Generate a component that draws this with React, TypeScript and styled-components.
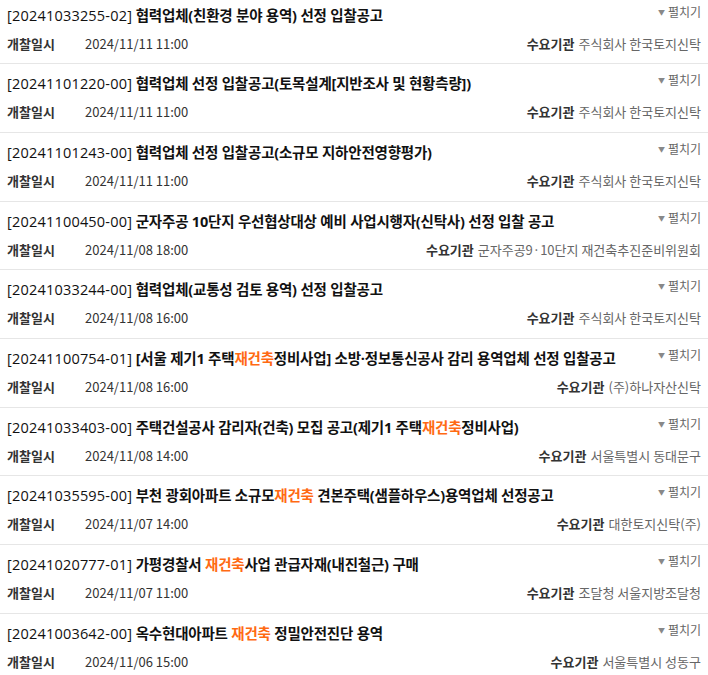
import styled, { createGlobalStyle } from 'styled-components';

const GlobalStyle = createGlobalStyle`
  body {
    margin: 0;
    background: #fff;
    font-family: "Noto Sans CJK KR", "Noto Sans", sans-serif;
    color: #222;
  }
`;

const List = styled.ul`
  list-style: none;
  margin: -4.5px 0 0;
  padding: 0;
`;

const Row = styled.li`
  padding: 10px 7px 9.7px;
  border-bottom: 1px solid #e6e6e6;
`;

const TopLine = styled.div`
  display: flex;
  align-items: flex-start;
  justify-content: space-between;
  gap: 12px;
`;

const Title = styled.div`
  font-family: "Open Sans", "Noto Sans CJK KR", sans-serif;
  font-size: 14.5px;
  line-height: 20px;
  font-weight: 700;
  color: #111;
  letter-spacing: -0.2px;
`;

const Code = styled.span`
  font-weight: 400;
  letter-spacing: 0.2px;
`;

const Keyword = styled.span`
  color: #ff6a13;
`;

const Toggle = styled.button`
  display: flex;
  align-items: center;
  gap: 3px;
  border: none;
  background: transparent;
  padding: 0;
  margin-top: -3px;
  font-family: inherit;
  font-size: 12px;
  line-height: 18px;
  color: #666;
  white-space: nowrap;
  cursor: pointer;
`;

const Caret = styled.span`
  font-size: 7px;
  color: #888;
`;

const MetaLine = styled.div`
  display: flex;
  align-items: center;
  justify-content: space-between;
  margin-top: 8px;
  font-size: 13px;
  line-height: 20px;
`;

const DateBox = styled.div`
  display: flex;
`;

const Label = styled.span<{ $wide?: boolean }>`
  font-weight: 700;
  color: #333;
  width: ${p => (p.$wide ? '78px' : 'auto')};
  margin-right: ${p => (p.$wide ? '0' : '4px')};
`;

const DateValue = styled.span`
  color: #333;
`;

const Agency = styled.div`
  color: #666;
`;

interface Notice {
  code: string;
  title: string;
  date: string;
  agency: string;
}

const notices: Notice[] = [
  { code: '20241033255-02', title: '협력업체(친환경 분야 용역) 선정 입찰공고', date: '2024/11/11 11:00', agency: '주식회사 한국토지신탁' },
  { code: '20241101220-00', title: '협력업체 선정 입찰공고(토목설계[지반조사 및 현황측량])', date: '2024/11/11 11:00', agency: '주식회사 한국토지신탁' },
  { code: '20241101243-00', title: '협력업체 선정 입찰공고(소규모 지하안전영향평가)', date: '2024/11/11 11:00', agency: '주식회사 한국토지신탁' },
  { code: '20241100450-00', title: '군자주공 10단지 우선협상대상 예비 사업시행자(신탁사) 선정 입찰 공고', date: '2024/11/08 18:00', agency: '군자주공9·10단지 재건축추진준비위원회' },
  { code: '20241033244-00', title: '협력업체(교통성 검토 용역) 선정 입찰공고', date: '2024/11/08 16:00', agency: '주식회사 한국토지신탁' },
  { code: '20241100754-01', title: '[서울 제기1 주택재건축정비사업] 소방·정보통신공사 감리 용역업체 선정 입찰공고', date: '2024/11/08 16:00', agency: '(주)하나자산신탁' },
  { code: '20241033403-00', title: '주택건설공사 감리자(건축) 모집 공고(제기1 주택재건축정비사업)', date: '2024/11/08 14:00', agency: '서울특별시 동대문구' },
  { code: '20241035595-00', title: '부천 광회아파트 소규모재건축 견본주택(샘플하우스)용역업체 선정공고', date: '2024/11/07 14:00', agency: '대한토지신탁(주)' },
  { code: '20241020777-01', title: '가평경찰서 재건축사업 관급자재(내진철근) 구매', date: '2024/11/07 11:00', agency: '조달청 서울지방조달청' },
  { code: '20241003642-00', title: '옥수현대아파트 재건축 정밀안전진단 용역', date: '2024/11/06 15:00', agency: '서울특별시 성동구' },
];

const KEYWORD = '재건축';

function highlight(text: string) {
  const parts = text.split(KEYWORD);
  return parts.map((part, i) => (
    <span key={i}>
      {part}
      {i < parts.length - 1 && <Keyword>{KEYWORD}</Keyword>}
    </span>
  ));
}

export default function App() {
  return (
    <>
      <GlobalStyle />
      <List>
        {notices.map(n => (
          <Row key={n.code}>
            <TopLine>
              <Title>
                <Code>[{n.code}]</Code> {highlight(n.title)}
              </Title>
              <Toggle>
                <Caret>▼</Caret>펼치기
              </Toggle>
            </TopLine>
            <MetaLine>
              <DateBox>
                <Label $wide>개찰일시</Label>
                <DateValue>{n.date}</DateValue>
              </DateBox>
              <Agency>
                <Label>수요기관</Label>
                {n.agency}
              </Agency>
            </MetaLine>
          </Row>
        ))}
      </List>
    </>
  );
}
